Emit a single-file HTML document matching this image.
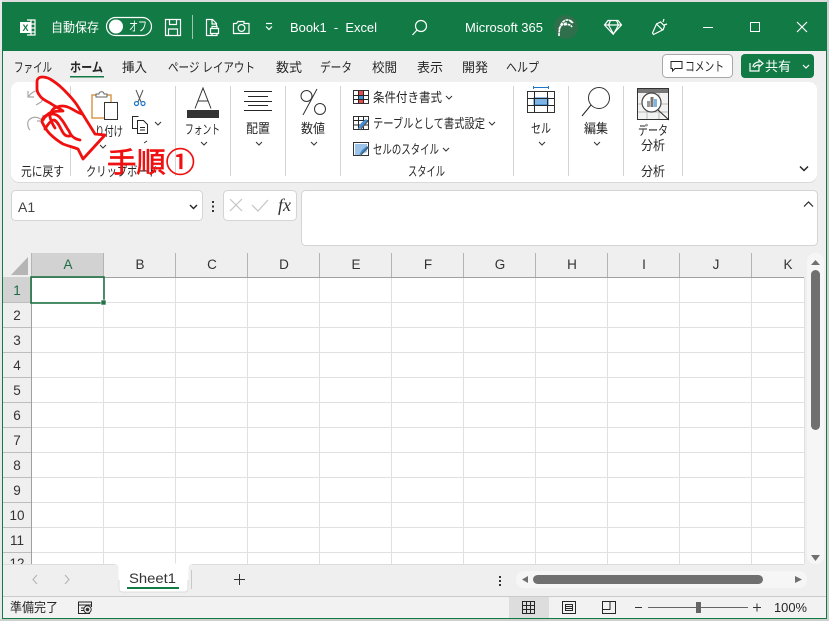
<!DOCTYPE html>
<html><head><meta charset="utf-8"><style>
html,body{margin:0;padding:0;background:#fff;width:830px;height:622px;overflow:hidden}
svg{display:block}
text{font-family:"Liberation Sans","Noto Sans CJK JP",sans-serif;fill:#262626;font-size:13px}
.w text,text.w{fill:#fff}
.hd{font-size:13.5px;text-anchor:middle;fill:#333}
.rh{font-size:13.5px;text-anchor:middle;fill:#333}
.g{fill:none;stroke:#262626;stroke-width:1}
.wl{fill:none;stroke:#fff;stroke-width:1.2}
.c{fill:none;stroke:#333;stroke-width:1}
</style></head><body>
<svg width="830" height="622" viewBox="0 0 830 622" xmlns="http://www.w3.org/2000/svg">
<rect x="0" y="0" width="830" height="622" fill="#fff"/>
<rect x="0" y="0" width="829" height="3" fill="#dcdcdc"/>
<rect x="0" y="0" width="2" height="620" fill="#e8e8e8"/>
<rect x="827" y="0" width="2" height="621" fill="#d0d0d0"/>
<rect x="0" y="619" width="829" height="2" fill="#cfcfcf"/>
<rect x="2" y="2" width="825" height="617" fill="#107c41"/>
<rect x="3" y="51" width="823" height="567" fill="#efefef"/>
<rect x="2" y="2" width="825" height="49" fill="#127a45"/>

<!-- Title bar -->
<g class="w">
<path d="M27 20h8v15h-8M27 24h8M27 28h8M27 32h8M31 20v15" class="wl" stroke-width="1"/>
<rect x="20" y="22" width="11" height="11" fill="#fff"/>
<text x="25.500" y="31" style="font-size:9px;font-weight:bold;fill:#127a45" text-anchor="middle">X</text>
<text x="51" y="32" textLength="48" lengthAdjust="spacingAndGlyphs">自動保存</text>
<rect x="106.500" y="17.500" width="45" height="18" rx="9" fill="none" stroke="#fff" stroke-width="1.200"/>
<circle cx="116" cy="26.500" r="7" fill="#fff"/>
<text x="129" y="31" textLength="18" lengthAdjust="spacingAndGlyphs">オフ</text>
<path d="M165.500 19.500h15v16h-15zM169.500 19.500v5h7v-5M168.500 35.500v-6.500h9v6.500" class="wl"/>
<rect x="192" y="15" width="1" height="24" fill="#9cc8ae"/>
<path d="M213 35.500h-6.500v-16h6l4 4v3M212 19.500v4.500h5M210.500 28.500h8v5h-8zM212 28.500v-2h5v2M212 33.500v2h5v-2" class="wl"/>
<path d="M233.500 23.500h3l1.500-2h6v2h5v10h-15.500z" class="wl"/><circle cx="241.500" cy="28" r="3.400" class="wl"/>
<path d="M266 23.500h6" class="wl"/><path d="M266 26.500l3 3 3-3" class="wl"/>
<text x="290" y="32" textLength="87" lengthAdjust="spacingAndGlyphs" style="font-size:13px">Book1 &#160;- &#160;Excel</text>
<circle cx="421" cy="26" r="5.500" class="wl"/><path d="M417 30l-4.500 5" class="wl"/>
<text x="465" y="32" textLength="78" lengthAdjust="spacingAndGlyphs" style="font-size:13px">Microsoft 365</text>
<circle cx="566" cy="27" r="12" fill="#2f6f4b"/>
<path d="M559 36c0-8 2-13 5-15 3-2 7-1 9 2M559 29c2-4 5-6 8-6M570 21l3 2M564 25c3-1 6-1 8 2" fill="none" stroke="#fff" stroke-width="1.600" stroke-dasharray="3 .6"/>
<path d="M608 20.500h10l3.500 4.500-8.500 9-8.500-9zM604.500 25h17M610.500 20.500l-2 4.500 5 9 5-9-2-4.500" class="wl" stroke-width="1"/>
<path d="M652.500 33l4-9 6 6-9 4.500zM656.500 24l4-2 4 4-1.500 4M664 19l-1 3M667 24l-3 1" class="wl" stroke-width="1"/>
<rect x="703" y="27" width="10" height="1" fill="#fff"/>
<rect x="750.500" y="22.500" width="9" height="9" fill="none" stroke="#fff"/>
<path d="M797 22l10 10M807 22l-10 10" class="wl" stroke-width="1"/>
</g>

<!-- Tabs -->
<text x="14" y="72" textLength="38" lengthAdjust="spacingAndGlyphs">ファイル</text>
<text x="70" y="72" textLength="33" lengthAdjust="spacingAndGlyphs" style="font-weight:bold">ホーム</text>
<rect x="70" y="76" width="34" height="1.500" fill="#127a45"/>
<text x="122" y="72" textLength="25" lengthAdjust="spacingAndGlyphs">挿入</text>
<text x="168" y="72" textLength="87" lengthAdjust="spacingAndGlyphs">ページ レイアウト</text>
<text x="276" y="72" textLength="26" lengthAdjust="spacingAndGlyphs">数式</text>
<text x="320" y="72" textLength="32" lengthAdjust="spacingAndGlyphs">データ</text>
<text x="372" y="72" textLength="25" lengthAdjust="spacingAndGlyphs">校閲</text>
<text x="417" y="72" textLength="26" lengthAdjust="spacingAndGlyphs">表示</text>
<text x="462" y="72" textLength="26" lengthAdjust="spacingAndGlyphs">開発</text>
<text x="506" y="72" textLength="33" lengthAdjust="spacingAndGlyphs">ヘルプ</text>

<rect x="662.500" y="54.500" width="70" height="23" rx="4" fill="#fff" stroke="#a8a8a8"/>
<path d="M671 61.500h11v7h-7l-2.500 2.500v-2.500h-1.500z" class="g"/>
<text x="685" y="71" textLength="39" lengthAdjust="spacingAndGlyphs">コメント</text>
<rect x="741" y="54" width="73" height="24" rx="4" fill="#127a45"/>
<path d="M750 63v8h9v-5M753 67c0-3 3-5 6-5v-2l4 3.500-4 3.500v-2c-2 0-4 1-5 2.500" class="wl" stroke-width="1"/>
<text x="765" y="71" textLength="26" lengthAdjust="spacingAndGlyphs" class="w" style="fill:#fff;font-size:13px">共有</text>
<path d="M803 65l3 3 3-3" class="wl" stroke-width="1"/>

<!-- Ribbon -->
<rect x="11" y="83" width="806" height="100" rx="8" fill="#d9d9d9"/>
<rect x="11" y="82" width="806" height="100" rx="8" fill="#fff"/>
<g fill="#d4d4d4">
<rect x="70" y="86" width="1" height="90"/><rect x="175" y="86" width="1" height="90"/>
<rect x="230" y="86" width="1" height="90"/><rect x="285" y="86" width="1" height="90"/>
<rect x="340" y="86" width="1" height="90"/><rect x="513" y="86" width="1" height="90"/>
<rect x="568" y="86" width="1" height="90"/><rect x="623" y="86" width="1" height="90"/>
<rect x="682" y="86" width="1" height="90"/>
</g>
<!-- undo/redo -->
<path d="M28 91v6h6M28 97c3-4 7-7 10-6 5 1 6 8 3 11l-5 3" fill="none" stroke="#a8a8a8" stroke-width="1.200"/>
<path d="M30 130c-3-3-3-9 0-11 4-3 9-2 13 2M43 115v6h-6" fill="none" stroke="#a8a8a8" stroke-width="1.200"/>
<text x="21" y="176" textLength="43" lengthAdjust="spacingAndGlyphs">元に戻す</text>
<!-- Clipboard -->
<rect x="92" y="95" width="19" height="23" fill="#fff" stroke="#d89a4c" stroke-width="1.500"/>
<path d="M96 97v-3h3c0-3 5-3 5 0h3v3z" fill="#fff" stroke="#666"/>
<rect x="104.500" y="102.500" width="13" height="17" fill="#fff" stroke="#333"/>
<text x="95" y="136" textLength="28" lengthAdjust="spacingAndGlyphs">り付け</text>
<path d="M100 145l3 3 3-3" class="c"/>
<path d="M136 90l5 12M143 90l-5 12" fill="none" stroke="#555"/><circle cx="136.500" cy="103.500" r="2" fill="none" stroke="#1d76c9" stroke-width="1.200"/><circle cx="143" cy="103.500" r="2" fill="none" stroke="#1d76c9" stroke-width="1.200"/>
<path d="M137 128.500h-4.500v-12h6M137.500 120.500h6l4 4v9h-10z" class="g"/><path d="M140 127.500h5M140 130h5" class="g" stroke-width=".7"/>
<path d="M155 122l3 3 3-3" class="c"/>
<text x="86" y="176" textLength="72" lengthAdjust="spacingAndGlyphs">クリップボード</text>
<path d="M144 143l3-2" class="c"/>
<!-- Font -->
<path d="M195 108.500l8-20.500 8 20.500M198 101h10" fill="none" stroke="#333" stroke-width="1"/>
<rect x="187" y="110" width="32" height="8" fill="#333"/>
<text x="185" y="134" textLength="35" lengthAdjust="spacingAndGlyphs">フォント</text>
<path d="M201 142l3 3 3-3" class="c"/>
<!-- Alignment -->
<path d="M244 91.500h28M248 96.500h20M244 101.500h28M248 105.500h20M244 110.500h28" class="g"/>
<text x="246" y="133" textLength="24" lengthAdjust="spacingAndGlyphs">配置</text>
<path d="M256 142l3 3 3-3" class="c"/>
<!-- Number -->
<circle cx="306.500" cy="96" r="5.500" fill="none" stroke="#333"/><circle cx="320" cy="109" r="5.500" fill="none" stroke="#333"/>
<path d="M317 89l-14 26" fill="none" stroke="#333"/>
<text x="301" y="133" textLength="24" lengthAdjust="spacingAndGlyphs">数値</text>
<path d="M311 142l3 3 3-3" class="c"/>
<!-- Styles -->
<rect x="353.500" y="90.500" width="15" height="13" fill="#fff" stroke="#333"/>
<rect x="358" y="91" width="5" height="4" fill="#e84a4a"/><rect x="358" y="99" width="5" height="4" fill="#e84a4a"/><rect x="358" y="95" width="5" height="4" fill="#3f8fd8"/>
<path d="M353.500 95.500h15M353.500 99.500h15M358.500 90.500v13M363.500 90.500v13" class="g" stroke-width=".8"/>
<text x="373" y="102" textLength="69" lengthAdjust="spacingAndGlyphs">条件付き書式</text>
<path d="M446 96l3 3 3-3" class="c"/>
<rect x="353.500" y="116.500" width="15" height="13" fill="#fff" stroke="#333"/>
<path d="M353.500 120.500h15M353.500 125h15M358.500 116.500v13M363.500 116.500v13" class="g" stroke-width=".8"/>
<path d="M358 129l3-6 5-4 2 2-4 5-5 3z" fill="#3f8fd8"/><path d="M360 130l8-9" stroke="#555" stroke-width="1.200"/>
<text x="373" y="128" textLength="112" lengthAdjust="spacingAndGlyphs">テーブルとして書式設定</text>
<path d="M489 122l3 3 3-3" class="c"/>
<rect x="353.500" y="142.500" width="15" height="13" fill="#fff" stroke="#333"/>
<path d="M355 144h12v8l-7 3h-5z" fill="#9cc4ea"/>
<path d="M359 155l3-5 5-4 2 2-5 4z" fill="#3f8fd8"/><path d="M360 156l8-9" stroke="#555" stroke-width="1.200"/>
<text x="373" y="154" textLength="66" lengthAdjust="spacingAndGlyphs">セルのスタイル</text>
<path d="M443 148l3 3 3-3" class="c"/>
<text x="408" y="176" textLength="37" lengthAdjust="spacingAndGlyphs">スタイル</text>
<!-- Cells -->
<path d="M533.500 87.500h15M533.500 86v3M548.500 86v3" fill="none" stroke="#1d76c9"/>
<rect x="527.500" y="91.500" width="27" height="21" fill="#fff" stroke="#333"/>
<rect x="534" y="98" width="14" height="7" fill="#7cb5e8" stroke="#1d76c9"/>
<path d="M527.500 98.500h27M527.500 105.500h27M534.500 91.500v21M547.500 91.500v21" class="g" stroke-width=".8"/>
<text x="531" y="133" textLength="20" lengthAdjust="spacingAndGlyphs">セル</text>
<path d="M539 142l3 3 3-3" class="c"/>
<!-- Edit -->
<circle cx="599" cy="98" r="10.500" fill="none" stroke="#333"/><path d="M591 105l-9 11" class="g"/>
<text x="584" y="133" textLength="24" lengthAdjust="spacingAndGlyphs">編集</text>
<path d="M594 142l3 3 3-3" class="c"/>
<!-- Analysis -->
<rect x="637.500" y="88.500" width="31" height="31" fill="#f2f2f2" stroke="#333"/>
<rect x="638" y="89" width="30" height="4" fill="#777"/>
<path d="M638 104h30M638 112h30M647 93v26M659 93v26" stroke="#bbb" fill="none"/>
<circle cx="651.500" cy="102.500" r="9.500" fill="#fff" stroke="#444" stroke-width="1.200"/>
<rect x="647" y="101" width="3" height="6" fill="#999"/><rect x="650.500" y="97" width="3" height="10" fill="#777"/><rect x="654" y="99" width="3" height="8" fill="#7cb5e8"/>
<path d="M658 110l11 10" class="g"/>
<text x="638" y="135" textLength="30" lengthAdjust="spacingAndGlyphs">データ</text>
<text x="641" y="150" textLength="24" lengthAdjust="spacingAndGlyphs">分析</text>
<text x="641" y="176" textLength="24" lengthAdjust="spacingAndGlyphs">分析</text>
<path d="M800 166.500l4 4 4-4" fill="none" stroke="#262626" stroke-width="1.500"/>

<!-- Hand -->
<path d="M37 82c0-3 2-5 5-5 3 0 6 1 8 2 5 3 9 6 13 10 5 5 10 10 14 16l18 29 10 1-22 24-5-10c-5-2-10-3-15-5-5-3-9-6-13-10-4-4-6-8-8-12 0-3 1-5 5-7 2-2 4-3 6-3 3-1 7-1 10-1-4-3-9-5-13-8-4-2-8-4-10-7-1-2-3-3-3-7z" fill="#fff" stroke="#f01010" stroke-width="2.800" stroke-linejoin="round"/>
<path d="M50 116c1-5 3-8 7-9 5-2 9-1 13 1 4 2 8 5 12 6M43 120c2-4 5-6 9-6 4 0 7 2 9 5 3 3 5 8 8 12 2 5 5 8 11 9M45 129c3-5 6-9 9-9 3 1 5 5 7 9 2 4 4 8 9 7M50 117c1 4 3 8 5 11" fill="none" stroke="#f01010" stroke-width="2.800" stroke-linecap="round"/>
<text x="107" y="172" style="font-size:28px;fill:#f01010;stroke:#f01010;stroke-width:.7px;font-family:'Noto Sans CJK JP','Liberation Sans',sans-serif" textLength="88" lengthAdjust="spacingAndGlyphs">手順①</text>

<!-- Formula bar -->
<rect x="11.500" y="190.500" width="191" height="30" rx="4" fill="#fff" stroke="#d4d4d4"/>
<text x="18" y="212" style="font-size:14px;fill:#444">A1</text>
<path d="M190 205l3.500 3.500 3.500-3.500" fill="none" stroke="#262626" stroke-width="1.400"/>
<g fill="#333"><rect x="212" y="201" width="2" height="2"/><rect x="212" y="205.500" width="2" height="2"/><rect x="212" y="210" width="2" height="2"/></g>
<rect x="223.500" y="190.500" width="73" height="30" rx="4" fill="#fff" stroke="#d4d4d4"/>
<path d="M230 199l12 12M242 199l-12 12M252 205l6 6 10-11" fill="none" stroke="#c4c4c4" stroke-width="1.200"/>
<text x="278" y="211" style="font-family:'Liberation Serif',serif;font-size:18px;font-style:italic;fill:#333">fx</text>
<rect x="301.500" y="190.500" width="516" height="55" rx="4" fill="#fff" stroke="#d4d4d4"/>
<path d="M804 206.500l4.500-4.500 4.500 4.500" fill="none" stroke="#262626" stroke-width="1.200"/>

<!-- Grid -->
<rect x="31" y="277" width="773" height="287" fill="#fff"/>
<rect x="31" y="253" width="72" height="24" fill="#d2d2d2"/>
<rect x="3" y="277" width="28" height="25" fill="#d2d2d2"/>
<path d="M11 275l17-18v18z" fill="#b5b5b5"/>
<g fill="#b4b4b4">
<rect x="103" y="253" width="1" height="24"/><rect x="175" y="253" width="1" height="24"/><rect x="247" y="253" width="1" height="24"/><rect x="319" y="253" width="1" height="24"/><rect x="391" y="253" width="1" height="24"/><rect x="463" y="253" width="1" height="24"/><rect x="535" y="253" width="1" height="24"/><rect x="607" y="253" width="1" height="24"/><rect x="679" y="253" width="1" height="24"/><rect x="751" y="253" width="1" height="24"/>
<rect x="31" y="253" width="1" height="24"/>
</g>
<g fill="#e0e0e0">
<rect x="103" y="277" width="1" height="287"/><rect x="175" y="277" width="1" height="287"/><rect x="247" y="277" width="1" height="287"/><rect x="319" y="277" width="1" height="287"/><rect x="391" y="277" width="1" height="287"/><rect x="463" y="277" width="1" height="287"/><rect x="535" y="277" width="1" height="287"/><rect x="607" y="277" width="1" height="287"/><rect x="679" y="277" width="1" height="287"/><rect x="751" y="277" width="1" height="287"/>
<rect x="31" y="302" width="773" height="1"/><rect x="31" y="327" width="773" height="1"/><rect x="31" y="352" width="773" height="1"/><rect x="31" y="377" width="773" height="1"/><rect x="31" y="402" width="773" height="1"/><rect x="31" y="427" width="773" height="1"/><rect x="31" y="452" width="773" height="1"/><rect x="31" y="477" width="773" height="1"/><rect x="31" y="502" width="773" height="1"/><rect x="31" y="527" width="773" height="1"/><rect x="31" y="552" width="773" height="1"/>
<rect x="804" y="277" width="1" height="287"/>
</g>
<g fill="#bdbdbd">
<rect x="3" y="302" width="28" height="1"/><rect x="3" y="327" width="28" height="1"/><rect x="3" y="352" width="28" height="1"/><rect x="3" y="377" width="28" height="1"/><rect x="3" y="402" width="28" height="1"/><rect x="3" y="427" width="28" height="1"/><rect x="3" y="452" width="28" height="1"/><rect x="3" y="477" width="28" height="1"/><rect x="3" y="502" width="28" height="1"/><rect x="3" y="527" width="28" height="1"/><rect x="3" y="552" width="28" height="1"/>
</g>
<rect x="31" y="277" width="773" height="1" fill="#a0a0a0"/>
<rect x="31" y="277" width="1" height="287" fill="#a0a0a0"/>
<text class="hd" x="68" y="269" style="fill:#1d6b45">A</text><text class="hd" x="140" y="269">B</text><text class="hd" x="212" y="269">C</text><text class="hd" x="284" y="269">D</text><text class="hd" x="356" y="269">E</text><text class="hd" x="428" y="269">F</text><text class="hd" x="500" y="269">G</text><text class="hd" x="572" y="269">H</text><text class="hd" x="644" y="269">I</text><text class="hd" x="716" y="269">J</text><text class="hd" x="788" y="269">K</text>
<text class="rh" x="17" y="295" style="fill:#1d6b45">1</text><text class="rh" x="17" y="320">2</text><text class="rh" x="17" y="345">3</text><text class="rh" x="17" y="370">4</text><text class="rh" x="17" y="395">5</text><text class="rh" x="17" y="420">6</text><text class="rh" x="17" y="445">7</text><text class="rh" x="17" y="470">8</text><text class="rh" x="17" y="495">9</text><text class="rh" x="17" y="520">10</text><text class="rh" x="17" y="545">11</text><text class="rh" x="17" y="568">12</text>
<rect x="31" y="277" width="73" height="26" fill="none" stroke="#217346" stroke-width="1.600"/>
<rect x="101" y="300" width="5" height="5" fill="#217346" stroke="#fff" stroke-width=".6"/>

<!-- V scrollbar -->
<rect x="807" y="253" width="17" height="311" rx="8" fill="#f6f6f6"/>
<rect x="811" y="270" width="9" height="160" rx="4.500" fill="#707070"/>
<path d="M811 265l4.500-5 4.500 5z" fill="#707070"/>
<path d="M811 555l4.500 6 4.500-6z" fill="#707070"/>

<!-- Bottom band -->
<rect x="3" y="564" width="823" height="33" fill="#efefef"/>
<rect x="3" y="564" width="801" height="1" fill="#dcdcdc"/>
<path d="M37 575l-4 4.500 4 4.500M65 575l4 4.500-4 4.500" fill="none" stroke="#b8b8b8" stroke-width="1.200"/>
<path d="M115 564c3 0 4 1 4 4v20c0 3 1 4 4 4h61c3 0 4-1 4-4v-20c0-3 1-4 4-4z" fill="#fff" stroke="#fff"/>
<path d="M119 580v8c0 3 1 4 4 4h61c3 0 4-1 4-4v-8" fill="none" stroke="#dedede"/>
<text x="129" y="583" textLength="47" lengthAdjust="spacingAndGlyphs" style="font-size:14px;fill:#333">Sheet1</text>
<rect x="127" y="587" width="52" height="2" fill="#127a45"/>
<rect x="191" y="570" width="1" height="19" fill="#c8c8c8"/>
<path d="M239.500 574v11M234 579.500h11" stroke="#333" fill="none"/>
<g fill="#333"><rect x="499" y="576" width="2" height="2"/><rect x="499" y="580" width="2" height="2"/><rect x="499" y="584" width="2" height="2"/></g>
<rect x="516" y="571" width="291" height="17" rx="8" fill="#f6f6f6"/>
<rect x="533" y="575" width="230" height="9" rx="4.500" fill="#707070"/>
<path d="M528 576v7l-6-3.500z" fill="#707070"/>
<path d="M795 576v7l7-3.500z" fill="#707070"/>

<!-- Status bar -->
<rect x="3" y="597" width="823" height="21" fill="#f2f2f2"/>
<rect x="3" y="596" width="823" height="1" fill="#cacaca"/>
<text x="10" y="612" textLength="48" lengthAdjust="spacingAndGlyphs">準備完了</text>
<path d="M90 613.500h-11.500v-11.500h13v5M78.500 605h13M81 608h5M81 610.500h3" class="g" stroke="#333"/>
<circle cx="87.500" cy="609.500" r="3.700" fill="#f2f2f2" stroke="#333"/><circle cx="87.500" cy="609.500" r="1.800" fill="#333"/>
<rect x="509" y="597" width="40" height="21" fill="#dddddd"/>
<path d="M522.500 601.500h12v12h-12zM522.500 605.500h12M522.500 609.500h12M526.500 601.500v12M530.500 601.500v12" class="g" stroke="#333"/>
<path d="M562.500 601.500h13v12h-13zM565.500 604.500h7v6h-7zM565.500 606.500h7M565.500 608.500h7" class="g" stroke="#333"/>
<path d="M602.500 601.500h13v12h-13zM602.500 609.500h7.500v-8" class="g" stroke="#333"/>
<rect x="635" y="607" width="7" height="1" fill="#333"/>
<rect x="648" y="607" width="100" height="1" fill="#666"/>
<rect x="696" y="602" width="5" height="11" fill="#666"/>
<path d="M753 607.500h8M757 603.500v8" stroke="#333" fill="none"/>
<text x="774" y="612" textLength="33" lengthAdjust="spacingAndGlyphs" style="font-size:13px">100%</text>
</svg>
</body></html>
